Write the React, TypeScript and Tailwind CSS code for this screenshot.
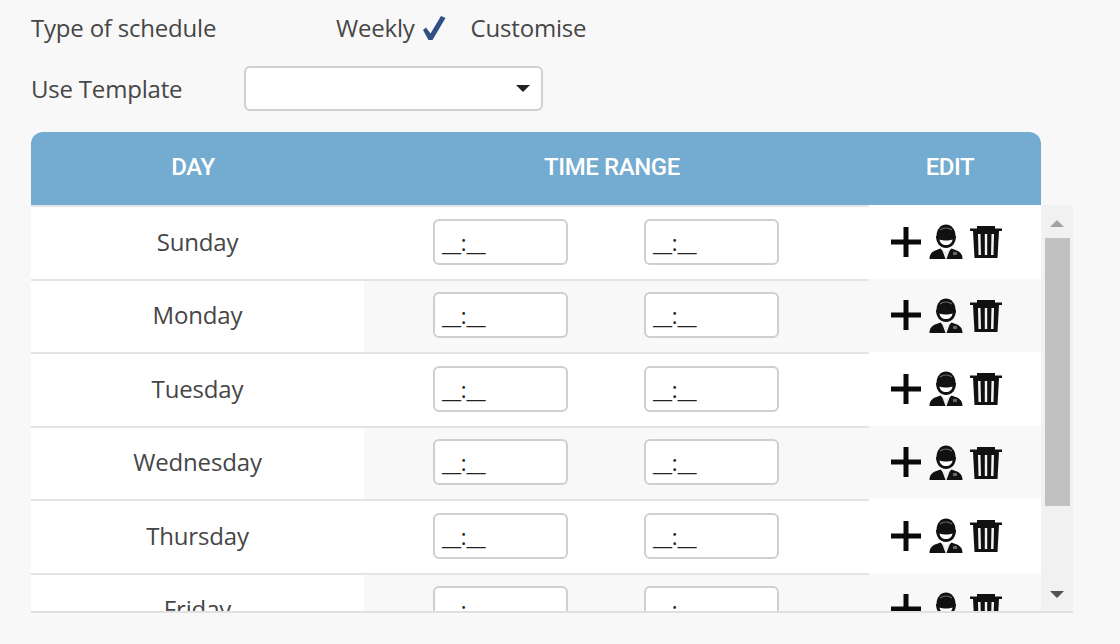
const days = ["Sunday", "Monday", "Tuesday", "Wednesday", "Thursday", "Friday"];

function PlusIcon() {
  return (
    <svg width="32" height="32" viewBox="0 0 32 32" className="shrink-0">
      <path d="M13.500 1h5v12.500H31v5H18.500V31h-5V18.500H1v-5h12.500z" fill="#0a0a0a" />
    </svg>
  );
}

function WorkerIcon() {
  return (
    <svg width="34" height="35" viewBox="0 0 34 35" className="shrink-0">
      <path d="M7.500 12C7.500 5 12 .5 17 .5S26.500 5 26.500 12v1.500h-19z" fill="#111" />
      <path d="M11 6c2-1.500 4-2 6-2s4 .5 6 2" fill="none" stroke="#666" strokeWidth="1.200" />
      <path d="M7 12h20c0 7-4 12-10 12S7 19 7 12z" fill="#111" />
      <path d="M10.500 15.500c2 .8 4 1 6.500 1s4.500-.2 6.500-1c-.3 3.500-3 5.500-6.500 5.500s-6.200-2-6.500-5.500z" fill="#fff" />
      <path d="M.5 35c0-5 2.500-7.500 7-9l4-1.500 5.500 5.500 5.500-5.500 4 1.500c4.500 1.500 7 4 7 9z" fill="#111" />
      <path d="M14 25l3 3.500 3-3.500.8 1-3.300 9h-1l-3.300-9z" fill="#eee" />
      <rect x="24" y="28" width="4" height="3" fill="#666" />
    </svg>
  );
}

function TrashIcon() {
  return (
    <svg width="32" height="33" viewBox="0 0 32 33" className="shrink-0">
      <path d="M7 1h18v2.500h7V6H0V3.500h7z" fill="#111" />
      <path d="M3 6h26l-1.500 27h-23z" fill="#111" />
      <path d="M8 9h2.500l.5 21H8.500zM14.800 9h2.400v21h-2.400zM21.500 9H24l-.5 21H21z" fill="#f4f4f4" />
    </svg>
  );
}

function TimeBox() {
  return (
    <div className="w-[135px] h-[46px] bg-white border-2 border-[#cfcfcf] rounded-[6px] pl-[7px] flex items-center text-[22px] leading-none text-[#222]">
      __:__
    </div>
  );
}

function DayRow({ day, index }: { day: string; index: number }) {
  const shaded = index % 2 === 1;
  return (
    <div className={shaded ? "flex h-[73.5px] shrink-0 bg-[#f8f8f8]" : "flex h-[73.5px] shrink-0 bg-white"}>
      <div className="w-[333px] bg-white border-t-2 border-[#e4e4e4] pb-[2px] flex items-center justify-center tracking-[-0.15px]">
        {day}
      </div>
      <div className="w-[505px] border-t-2 border-[#e4e4e4] pb-[2px] flex items-center gap-[76px] pl-[69px]">
        <TimeBox />
        <TimeBox />
      </div>
      <div className="w-[172px] pt-[2px] pb-[2px] flex items-center gap-[7px] pl-[21px]">
        <PlusIcon />
        <WorkerIcon />
        <TrashIcon />
      </div>
    </div>
  );
}

export default function App() {
  return (
    <div className="w-[1120px] h-[644px] overflow-hidden bg-[#f8f8f8] pl-[31px] text-[24px] text-[#464646] tracking-[-0.2px] font-['Open_Sans','Liberation_Sans',sans-serif]">
      <div className="flex items-center h-[55px]">
        <div className="w-[305px]">Type of schedule</div>
        <div>Weekly</div>
        <svg width="26" height="26" viewBox="0 0 26 26" className="ml-[6px]">
          <path d="M2 15l3-2.500 4.500 6L20 1l4.500 2L11.500 25H7.500z" fill="#2f4f85" />
        </svg>
        <div className="ml-[24px]">Customise</div>
      </div>

      <div className="flex items-center mt-[11px] h-[45px]">
        <div className="w-[213px]">Use Template</div>
        <div className="w-[299px] h-full bg-white border-2 border-[#d0d0d0] rounded-[6px] flex items-center justify-end pr-[11px]">
          <div className="w-0 h-0 border-x-[7px] border-x-transparent border-t-[7px] border-t-[#222]" />
        </div>
      </div>

      <div className="w-[1010px] h-[73px] mt-[21px] pb-[3px] bg-[#74abd0] rounded-t-[12px] flex items-center text-white font-medium tracking-[-0.4px] font-['Roboto','Liberation_Sans',sans-serif]">
        <div className="w-[324px] text-center">DAY</div>
        <div className="w-[514px] text-center">TIME RANGE</div>
        <div className="w-[162px] text-center">EDIT</div>
      </div>

      <div className="flex w-[1042px] h-[408px] border-b-2 border-[#e0e0e0]">
        <div className="w-[1010px] overflow-hidden flex flex-col">
          {days.map((day, i) => (
            <DayRow key={day} day={day} index={i} />
          ))}
        </div>
        <div className="w-[32px] bg-[#f1f1f1] flex flex-col items-center">
          <div className="h-[33px] pt-[3px] flex items-center justify-center">
            <div className="w-0 h-0 border-x-[7px] border-x-transparent border-b-[7px] border-b-[#a3a3a3]" />
          </div>
          <div className="w-[25px] h-[268px] bg-[#c1c1c1]" />
          <div className="flex-1 flex items-end pb-[13px]">
            <div className="w-0 h-0 border-x-[7px] border-x-transparent border-t-[7px] border-t-[#505050]" />
          </div>
        </div>
      </div>
    </div>
  );
}
